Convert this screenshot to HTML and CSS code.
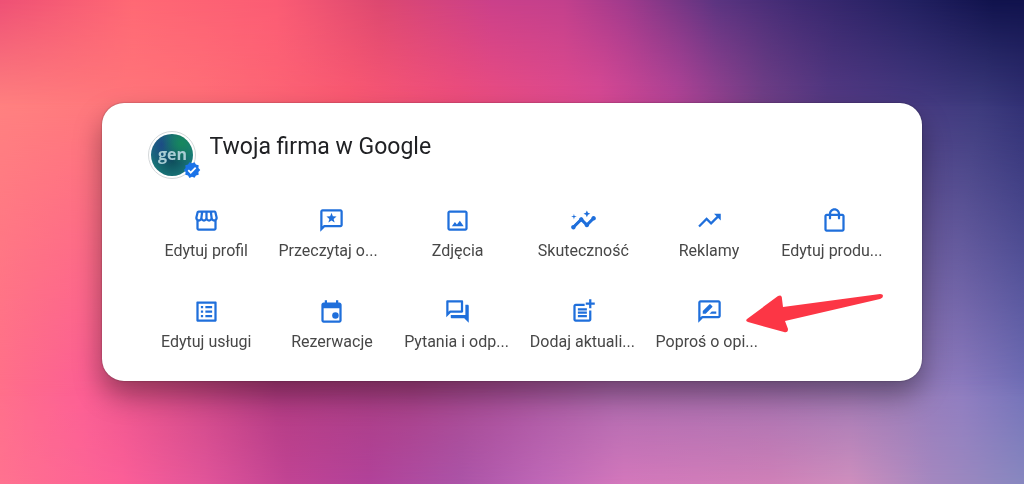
FILE: index.html
```
<!DOCTYPE html>
<html lang="pl">
    <head>
        <meta charset="utf-8">
        <title>Twoja firma w Google</title>
        <meta name="viewport" content="width=device-width, initial-scale=1">
        <link rel="stylesheet" href="styles.css">
    </head>
    <body>
        <div class="backdrop"></div>

        <main class="card">
            <header class="profile">
                <div class="avatar">
                    <span class="logo">gen</span>
                    <svg class="verified" viewBox="0 0 24 24">
                        <path fill="#1a73e8" d="M23 12l-2.44-2.79.34-3.69-3.61-.82-1.89-3.2L12 2.96 8.6 1.5 6.71 4.69 3.1 5.5l.34 3.7L1 12l2.44 2.79-.34 3.7 3.61.82L8.6 22.5l3.4-1.47 3.4 1.46 1.89-3.19 3.61-.82-.34-3.69L23 12z"/>
                        <path fill="none" stroke="#fff" stroke-width="2.4" d="M7 12.2l3.3 3.3 6.6-6.8"/>
                    </svg>
                </div>
                <h1>Twoja firma w Google</h1>
            </header>

            <nav class="actions">
                <a href="#" class="action">
                    <svg class="icon" viewBox="0 0 24 24"><path d="M21.9 8.89l-1.05-4.37c-.22-.9-1-1.52-1.91-1.52H5.05c-.9 0-1.69.63-1.9 1.52L2.1 8.89c-.24 1.02-.02 2.06.62 2.88.08.11.19.19.28.29V19c0 1.1.9 2 2 2h14c1.1 0 2-.9 2-2v-6.94c.09-.09.2-.18.28-.28.64-.82.87-1.87.62-2.89zM18.91 4.99l1.05 4.37c.1.42.01.84-.25 1.17-.14.18-.44.47-.94.47-.61 0-1.14-.49-1.21-1.14L16.98 5l1.93-.01zM13 5h1.96l.54 4.52c.05.39-.07.78-.33 1.07-.22.26-.54.41-.95.41-.67 0-1.22-.59-1.22-1.31V5zM8.49 9.52L9.04 5H11v4.69c0 .72-.55 1.31-1.29 1.31-.34 0-.65-.15-.89-.41-.25-.29-.37-.68-.33-1.07zM4.04 9.36L5.05 5h1.97l-.58 4.86c-.08.65-.6 1.14-1.21 1.14-.49 0-.8-.29-.93-.47-.27-.32-.36-.75-.26-1.17zM5 19v-6.03c.08.01.15.03.23.03.87 0 1.66-.36 2.24-.95.6.6 1.4.95 2.31.95.87 0 1.65-.36 2.23-.93.59.57 1.39.93 2.29.93.84 0 1.64-.35 2.24-.95.58.59 1.37.95 2.24.95.08 0 .15-.02.23-.03V19H5z"/></svg>
                    <span class="label">Edytuj profil</span>
                </a>
                <a href="#" class="action">
                    <svg class="icon" viewBox="0 0 24 24"><path d="M20 2H4c-1.1 0-2 .9-2 2v18l4-4h14c1.1 0 2-.9 2-2V4c0-1.1-.9-2-2-2zm0 14H5.2L4 17.2V4h16v12z"/><path d="M12 5.2l1.2 3.1 3.3.2-2.6 2.1.9 3.2-2.8-1.8-2.8 1.8.9-3.2-2.6-2.1 3.3-.2z"/></svg>
                    <span class="label cut">Przeczytaj o...</span>
                </a>
                <a href="#" class="action">
                    <svg class="icon" viewBox="0 0 24 24"><path d="M19 5v14H5V5h14m0-2H5c-1.1 0-2 .9-2 2v14c0 1.1.9 2 2 2h14c1.1 0 2-.9 2-2V5c0-1.1-.9-2-2-2z"/><path d="M14.1 12.3l-2.6 3.3-1.8-2.2L7 17h10.5z"/></svg>
                    <span class="label">Zdjęcia</span>
                </a>
                <a href="#" class="action">
                    <svg class="icon" viewBox="0 0 24 24"><path d="M21 8c-1.45 0-2.26 1.44-1.93 2.51l-3.55 3.56c-.3-.09-.74-.09-1.04 0l-2.55-2.55C12.27 10.45 11.46 9 10 9c-1.45 0-2.27 1.44-1.93 2.52l-4.56 4.55C2.44 15.74 1 16.55 1 18c0 1.1.9 2 2 2 1.45 0 2.26-1.44 1.93-2.51l4.55-4.56c.3.09.74.09 1.04 0l2.55 2.55C12.73 16.55 13.54 18 15 18c1.45 0 2.27-1.44 1.93-2.52l3.56-3.55C21.56 12.26 23 11.45 23 10c0-1.1-.9-2-2-2z"/><path d="M15 9l.94-2.07L18 6l-2.06-.93L15 3l-.92 2.07L12 6l2.08.93zM3.5 11L4 9l2-.5L4 8l-.5-2L3 8l-2 .5L3 9z"/><path fill="none" stroke="#1f6fdb" stroke-width="2.6" d="M3 18l7-7 5 5 6-6"/></svg>
                    <span class="label">Skuteczność</span>
                </a>
                <a href="#" class="action">
                    <svg class="icon" viewBox="0 0 24 24"><path d="M16 6l2.29 2.29-4.88 4.88-4-4L2 16.59 3.41 18l6-6 4 4 6.3-6.29L22 12V6z"/></svg>
                    <span class="label">Reklamy</span>
                </a>
                <a href="#" class="action">
                    <svg class="icon" viewBox="0 0 24 24"><path d="M19 6h-2c0-2.76-2.24-5-5-5S7 3.24 7 6H5c-1.1 0-2 .9-2 2v12c0 1.1.9 2 2 2h14c1.1 0 2-.9 2-2V8c0-1.1-.9-2-2-2zm-7-3c1.66 0 3 1.34 3 3H9c0-1.66 1.34-3 3-3zm7 17H5V8h2v2c0 .55.45 1 1 1s1-.45 1-1V8h6v2c0 .55.45 1 1 1s1-.45 1-1V8h2v12z"/></svg>
                    <span class="label cut">Edytuj produ...</span>
                </a>
                <a href="#" class="action">
                    <svg class="icon" viewBox="0 0 24 24"><path d="M19 5v14H5V5h14m1.1-2H3.9c-.5 0-.9.4-.9.9v16.2c0 .4.4.9.9.9h16.2c.4 0 .9-.5.9-.9V3.9c0-.5-.5-.9-.9-.9zM11 7h6v2h-6V7zm0 4h6v2h-6v-2zm0 4h6v2h-6v-2zM7 7h2v2H7V7zm0 4h2v2H7v-2zm0 4h2v2H7v-2z"/></svg>
                    <span class="label">Edytuj usługi</span>
                </a>
                <a href="#" class="action">
                    <svg class="icon" viewBox="0 0 24 24"><path d="M19 4h-1V2h-2v2H8V2H6v2H5c-1.1 0-2 .9-2 2v14c0 1.1.9 2 2 2h14c1.1 0 2-.9 2-2V6c0-1.1-.9-2-2-2zm0 16H5V9h14v11z"/><circle cx="15.5" cy="15.5" r="2.9"/></svg>
                    <span class="label">Rezerwacje</span>
                </a>
                <a href="#" class="action">
                    <svg class="icon" viewBox="0 0 24 24"><path d="M15 4v7H5.17L4 12.17V4h11m1-2H3c-.55 0-1 .45-1 1v14l4-4h10c.55 0 1-.45 1-1V3c0-.55-.45-1-1-1zm5 4h-2v9H6v2c0 .55.45 1 1 1h11l4 4V7c0-.55-.45-1-1-1z"/></svg>
                    <span class="label cut">Pytania i odp...</span>
                </a>
                <a href="#" class="action">
                    <svg class="icon" viewBox="0 0 24 24"><path d="M17 19.2H5V7h8V5H5c-1.1 0-2 .9-2 2v12c0 1.1.9 2 2 2h12c1.1 0 2-.9 2-2v-8h-2v8.2z"/><path d="M19 1h-2v3h-3v2h3v3h2V6h3V4h-3zM7 9h8v2H7zM7 12h8v2H7zM7 15h8v2H7z"/></svg>
                    <span class="label cut">Dodaj aktuali...</span>
                </a>
                <a href="#" class="action">
                    <svg class="icon" viewBox="0 0 24 24"><path d="M20 2H4c-1.1 0-2 .9-2 2v18l4-4h14c1.1 0 2-.9 2-2V4c0-1.1-.9-2-2-2zm0 14H5.2L4 17.2V4h16v12z"/><path d="M12 14h6v-2h-4zM6 14h2.6l5.9-5.9c.2-.2.2-.5 0-.7l-1.8-1.8c-.2-.2-.5-.2-.7 0L6 11.5z"/></svg>
                    <span class="label cut">Poproś o opi...</span>
                    <svg class="arrow" viewBox="0 0 140 42"><path d="M3 26L34 3Q38 1 38 6L39 14L136 1Q139 1 139 3Q139 5 136 6L41 28L44 36Q44 40 40 39L4 29Q1 28 3 26Z"/></svg>
                </a>
            </nav>
        </main>
    </body>
</html>
```
FILE: styles.css
```
* {
    box-sizing: border-box;
}

body {
    margin: 0;
    min-height: 100vh;
    display: flex;
    align-items: center;
    justify-content: center;
    font-family: Roboto, "Liberation Sans", sans-serif;
    color: #202124;
}

/* Colour wash: four bands from bottom to top, each fading into the one below */
.backdrop,
.backdrop::before,
.backdrop::after,
body::after {
    position: fixed;
    inset: 0;
}

.backdrop::before,
.backdrop::after,
body::after {
    content: "";
}

.backdrop {
    z-index: -2;
    background: linear-gradient(90deg, #ff7290 0%, #fc5f98 12%, #e2559a 20%, #c24494 28%, #b2429a 36%, #ac54a8 45%, #c068b8 53%, #d478bc 61%, #d080b8 75%, #cf8fbe 83%, #a588c0 91%, #8888c0 100%);
}

.backdrop::before {
    background: linear-gradient(90deg, #ff6f8a 0%, #fc5f94 8%, #e0508a 15%, #b03a80 27%, #a84084 40%, #a85098 50%, #a868ac 60%, #a070b0 75%, #967ab6 88%, #8e7cc0 94%, #7270b8 100%);
    -webkit-mask-image: linear-gradient(#000 78%, transparent 100%);
    mask-image: linear-gradient(#000 78%, transparent 100%);
}

.backdrop::after {
    background: linear-gradient(98deg, #ff8280 0%, #ff7078 19%, #fc5a72 33%, #f04e7c 43%, #dc4a94 56%, #b84498 63%, #744088 71%, #563a84 77%, #483a82 84%, #3c3a7c 91%, #24246a 100%);
    -webkit-mask-image: linear-gradient(#000 21%, transparent 82%);
    mask-image: linear-gradient(#000 21%, transparent 82%);
}

body::after {
    z-index: -1;
    background: linear-gradient(90deg, #ee5075 0%, #ff6874 13%, #fb5c74 27%, #dc4870 37%, #ca408a 48%, #c2408c 55%, #a03a8c 61%, #5a3480 70%, #3e2a72 78%, #222060 89%, #10124c 97%);
    -webkit-mask-image: linear-gradient(#000, transparent 22%);
    mask-image: linear-gradient(#000, transparent 22%);
}

.card {
    width: 80%;
    padding: 28px 24px 27px 41px;
    background: #fff;
    border-radius: 22px;
    box-shadow: 0 14px 28px rgba(0, 0, 0, 0.36), 0 0 2px rgba(0, 0, 0, 0.4);
}

.profile {
    display: flex;
    gap: 13px;
    padding-left: 5px;
}

.profile h1 {
    margin: 0;
    padding-top: 2px;
    font-size: 23px;
    line-height: 28px;
    font-weight: 400;
}

.avatar {
    position: relative;
    flex: none;
    width: 48px;
    height: 48px;
    padding: 2px;
    border: 1px solid #d4d8da;
    border-radius: 50%;
}

.logo {
    display: block;
    height: 100%;
    border-radius: 50%;
    background:
        radial-gradient(circle at 72% 22%, #16885c 0%, transparent 45%),
        radial-gradient(circle at 28% 25%, #1c4a86 0%, transparent 50%),
        radial-gradient(circle at 50% 60%, #0d4a58 0%, #1a7a7c 65%, #0c5058 100%);
    color: #a9cdd4;
    font-family: "Open Sans", sans-serif;
    font-size: 16px;
    line-height: 40px;
    font-weight: 700;
    text-align: center;
}

.verified {
    position: absolute;
    right: -6px;
    bottom: -1px;
    width: 18px;
    height: 18px;
}

.actions {
    display: grid;
    grid-template-columns: repeat(6, 1fr);
    row-gap: 35px;
    margin-top: 28px;
}

.action {
    position: relative;
    display: flex;
    flex-direction: column;
    align-items: center;
    gap: 5px;
    color: #474747;
    font-size: 16px;
    line-height: 24px;
    white-space: nowrap;
    text-decoration: none;
}

.label {
    width: 107px;
    text-align: center;
}

.label.cut {
    text-align: left;
}

.icon {
    width: 27px;
    height: 27px;
    fill: #1f6fdb;
}

/* Hand drawn pointer over the empty last cell */
.arrow {
    position: absolute;
    left: 98px;
    top: -5px;
    width: 140px;
    height: 42px;
    fill: #fc3645;
}
```
